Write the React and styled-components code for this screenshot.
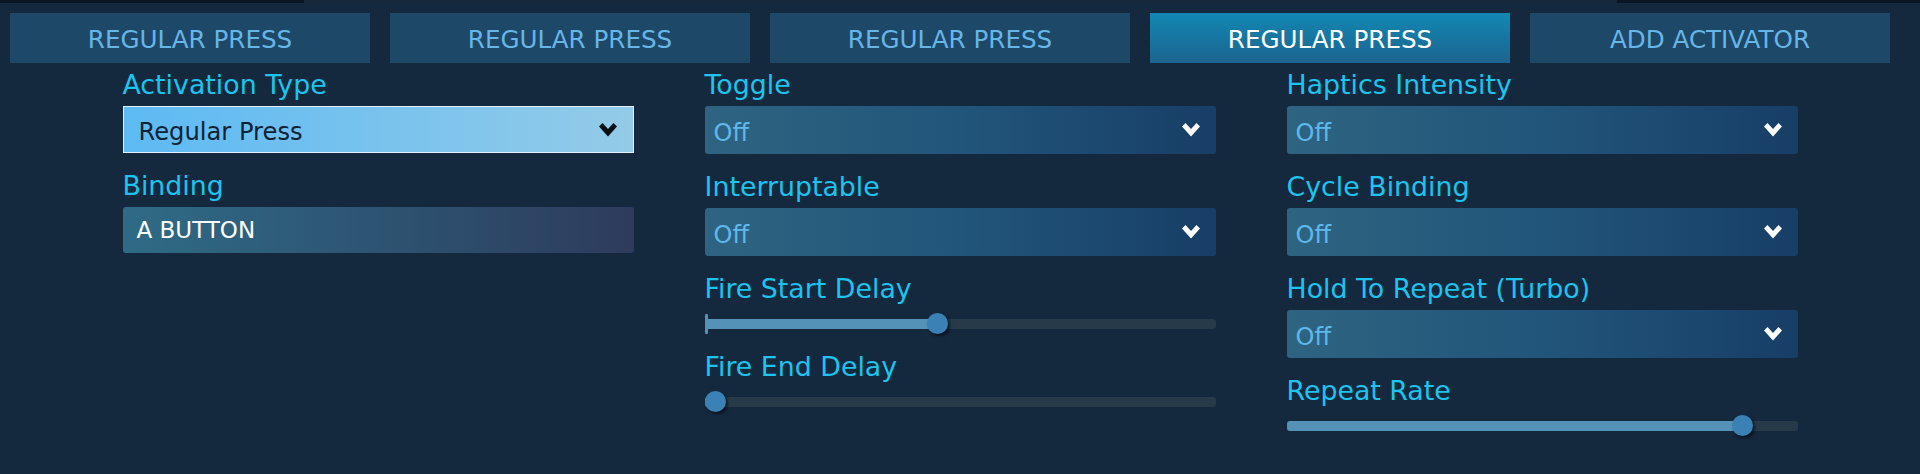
import styled, { createGlobalStyle, css } from 'styled-components'

const GlobalStyle = createGlobalStyle`
  html, body {
    margin: 0;
    background: #14283e;
  }
  body {
    font-family: "DejaVu Sans", "Liberation Sans", sans-serif;
  }
`

const Page = styled.div`
  width: 1920px;
  height: 474px;
  background: #14283e;
  overflow: hidden;
`

const TopStrip = styled.div`
  height: 3px;
  background: linear-gradient(
    to right,
    #0b1524 0,
    #0b1524 304px,
    #16283b 304px,
    #16283b 1617px,
    #0b1524 1617px
  );
`

const TabBar = styled.div`
  display: flex;
  gap: 20px;
  padding: 10px 30px 0 10px;
`

const Tab = styled.div`
  flex: 0 0 360px;
  height: 50px;
  box-sizing: border-box;
  padding-top: 3px;
  display: flex;
  align-items: center;
  justify-content: center;
  font-size: 24.6px;
  color: #66b6e8;
  background: #1e4867;
  ${props => props.$active && css`
    color: #ffffff;
    background: linear-gradient(to bottom, #1287b3, #1c6590);
  `}
`

const Columns = styled.div`
  display: grid;
  grid-template-columns: repeat(3, 511px);
  column-gap: 71px;
  justify-content: center;
  align-items: start;
  padding-top: 7px;
`

const Column = styled.div`
  display: flex;
  flex-direction: column;
`

const Field = styled.div`
  margin-bottom: 18px;
`

const Label = styled.div`
  font-size: 26.8px;
  line-height: 30px;
  color: #1cc4ee;
  white-space: nowrap;
`

const Select = styled.div`
  margin-top: 6px;
  height: 48px;
  box-sizing: border-box;
  display: flex;
  align-items: center;
  justify-content: space-between;
  padding: 0 16px 0 9px;
  border-radius: 3px;
  background: linear-gradient(to right, #2e6481, #22557a 50%, #173e66);
  color: #5eb8ec;
  font-size: 24px;
  ${props => props.$light && css`
    height: 47px;
    padding-left: 15px;
    border-radius: 0;
    border: 1px solid #e3f1fb;
    background: linear-gradient(to right, #5dbaf3, #93cbe8);
    color: #0f2235;
    font-size: 24.2px;
  `}
`

const SelectText = styled.span`
  padding-top: 5px;
`

const Chevron = styled.svg`
  width: 18px;
  height: 14px;
  flex: none;
  fill: ${props => props.$dark ? '#0a0f14' : '#ffffff'};
`

const BindingBox = styled.div`
  margin-top: 6px;
  height: 46px;
  display: flex;
  align-items: center;
  padding-left: 14px;
  border-radius: 3px;
  background: linear-gradient(to right, #2f6b86, #2d5674 45%, #2e3b5c);
  color: #ffffff;
  font-size: 23px;
`

const Slider = styled.div`
  position: relative;
  margin-top: 10px;
  height: 20px;
`

const Track = styled.div`
  position: absolute;
  left: 0;
  right: 0;
  top: 5px;
  height: 10px;
  border-radius: 3px;
  background: #263a49;
  overflow: hidden;
`

const Fill = styled.div`
  height: 100%;
  background: #5592b8;
`

const Tick = styled.div`
  position: absolute;
  left: 0;
  top: 0;
  width: 3px;
  height: 20px;
  border-radius: 1px;
  background: #5592b8;
`

const Knob = styled.div`
  position: absolute;
  top: -1px;
  width: 21px;
  height: 21px;
  border-radius: 50%;
  background: #3a82b5;
  box-shadow: 2px 2px 3px rgba(0, 0, 0, 0.55);
`

const ChevronIcon = ({ dark }) => (
  <Chevron viewBox="0 0 18 14" $dark={dark}>
    <polygon points="0,3.5 3.5,0 9,6 14.5,0 18,3.5 9,13.5" />
  </Chevron>
)

const DropField = ({ label, value, light }) => (
  <Field>
    <Label>{label}</Label>
    <Select $light={light}>
      <SelectText>{value}</SelectText>
      <ChevronIcon dark={light} />
    </Select>
  </Field>
)

const SliderField = ({ label, pct, tick }) => {
  const knobLeft = pct * (511 - 21)
  return (
    <Field>
      <Label>{label}</Label>
      <Slider>
        <Track>
          <Fill style={{ width: knobLeft + 10 }} />
        </Track>
        {tick && <Tick />}
        <Knob style={{ left: knobLeft }} />
      </Slider>
    </Field>
  )
}

const tabs = ['REGULAR PRESS', 'REGULAR PRESS', 'REGULAR PRESS', 'REGULAR PRESS', 'ADD ACTIVATOR']

export default function App() {
  return (
    <Page>
      <GlobalStyle />
      <TopStrip />
      <TabBar>
        {tabs.map((t, i) => (
          <Tab key={i} $active={i === 3}>{t}</Tab>
        ))}
      </TabBar>
      <Columns>
        <Column>
          <DropField label="Activation Type" value="Regular Press" light />
          <Field>
            <Label>Binding</Label>
            <BindingBox>A BUTTON</BindingBox>
          </Field>
        </Column>
        <Column>
          <DropField label="Toggle" value="Off" />
          <DropField label="Interruptable" value="Off" />
          <SliderField label="Fire Start Delay" pct={0.455} tick />
          <SliderField label="Fire End Delay" pct={0} />
        </Column>
        <Column>
          <DropField label="Haptics Intensity" value="Off" />
          <DropField label="Cycle Binding" value="Off" />
          <DropField label="Hold To Repeat (Turbo)" value="Off" />
          <SliderField label="Repeat Rate" pct={0.91} />
        </Column>
      </Columns>
    </Page>
  )
}
